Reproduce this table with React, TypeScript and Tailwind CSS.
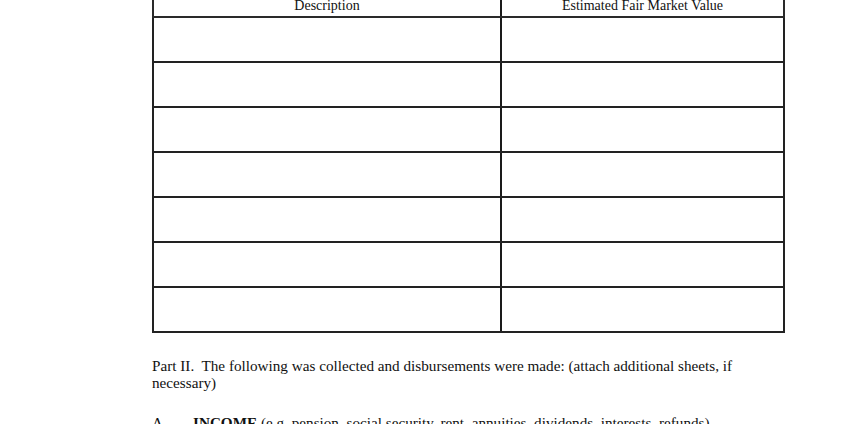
const rows = [0, 1, 2, 3, 4, 5, 6];

const App = () => {
    return (
        <div className="w-[850px] h-[424px] overflow-hidden bg-white text-[#111] font-['Liberation_Serif',serif]">
            <div className="pl-[152px]">
                {/* header row, top edge is off screen */}
                <div className="flex w-[633px] h-[20px] -mt-[2px] border-l-2 border-r-2 border-b-2 border-[#2a2a2a]">
                    <div className="w-[348px] border-r-2 border-[#1a1a1a] text-center text-[14px] leading-[16px]">
                        Description
                    </div>
                    <div className="flex-1 text-center text-[14px] leading-[16px]">
                        Estimated Fair Market Value
                    </div>
                </div>
                {rows.map((r) => (
                    <div
                        key={r}
                        className="flex w-[633px] h-[45px] border-l-2 border-r-2 border-b-2 border-[#222]"
                    >
                        <div className="w-[348px] border-r-2 border-[#1a1a1a]" />
                        <div className="flex-1" />
                    </div>
                ))}
            </div>

            <div className="pl-[152px] pr-[100px] mt-[24px] text-[15.2px] leading-[17px]">
                <p>
                    Part II.&nbsp; The following was collected and disbursements were made: (attach additional sheets, if
                    necessary)
                </p>
                <p className="mt-[23px] flex">
                    <span className="w-[41px]">A</span>
                    <span>
                        <b>INCOME</b> (e.g. pension, social security, rent, annuities, dividends, interests, refunds)
                    </span>
                </p>
            </div>
        </div>
    );
};

export default App;
